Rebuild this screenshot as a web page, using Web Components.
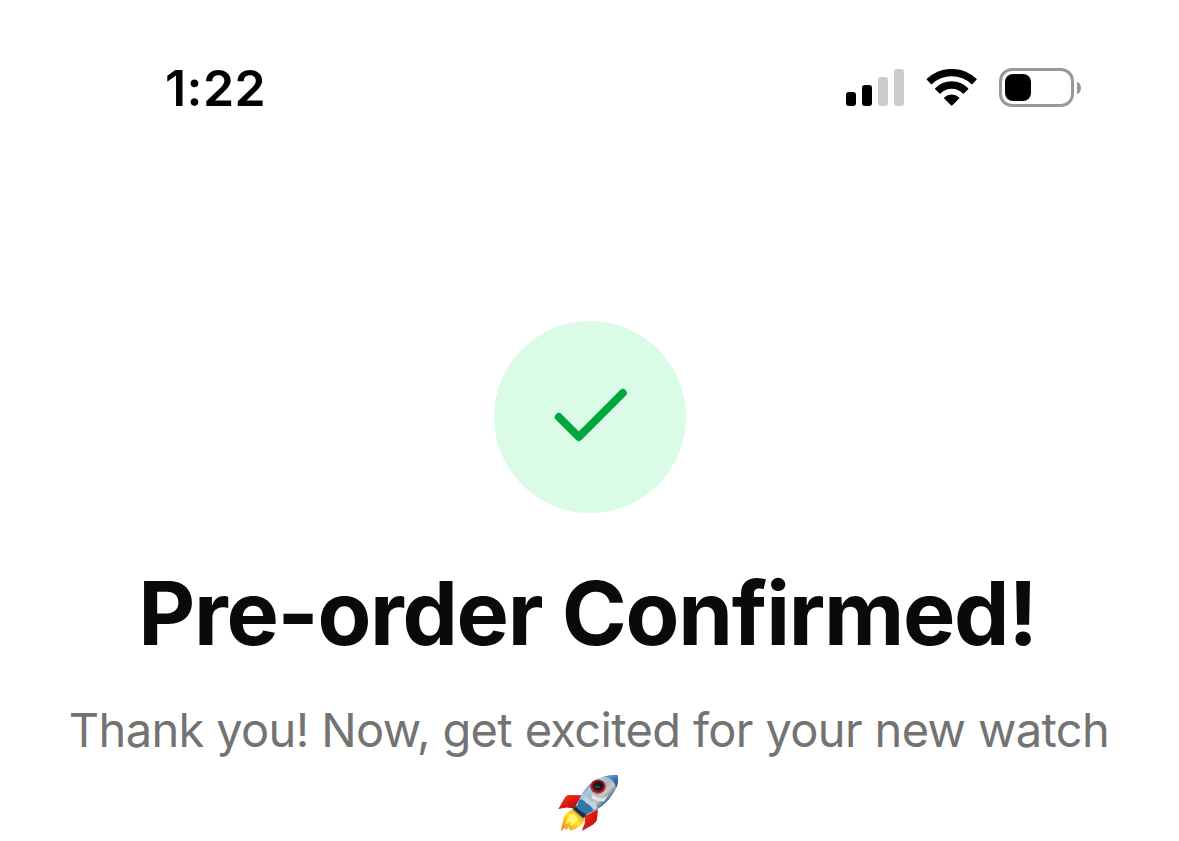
<!DOCTYPE html>
<html lang="en">
<head>
<meta charset="utf-8">
<title>Pre-order Confirmed</title>
<style>
    body{
        margin:0;
        background:white;
        font-family:Inter, "Liberation Sans", sans-serif;
        color:#0a0a0a;
    }
</style>
</head>
<body>
<order-confirmed></order-confirmed>
<script>
class SignalBars extends HTMLElement {
    constructor(){
        super();
        this.attachShadow({ mode : 'open' });
        this.shadowRoot.innerHTML = this.componentCSS() + this.componentHTML();
    }

    componentCSS(){
        return `
            <style>
                :host{
                    display:flex;
                    align-items:flex-end;
                    gap:6px;
                    height:37px;
                }
                i{
                    width:10px;
                    border-radius:3px;
                    background:#cdcdcd;
                }
                i.on{ background:black; }
            </style>`;
    }

    componentHTML(){
        const level = Number(this.getAttribute('level')) || 2;
        return [14, 21, 29, 37].map((h, n) => `<i class="${n < level ? 'on' : ''}" style="height:${h}px"></i>`).join('');
    }
}

class WifiIcon extends HTMLElement {
    constructor(){
        super();
        this.attachShadow({ mode : 'open' });
        this.shadowRoot.innerHTML = `
            <style>
                :host{ display:block; width:51px; height:37px; }
                svg{ display:block; }
            </style>
            <svg width="51" height="37" viewBox="273 42 153 111" stroke="black" stroke-width="4" stroke-linejoin="round">
                <path d="M277 73A106 106 0 0 1 423 73L411 86A89 89 0 0 0 289 86Z"/>
                <path d="M302 101A67 67 0 0 1 398 101L385 114A49 49 0 0 0 315 114Z"/>
                <path d="M329 129A30 30 0 0 1 371 129L350 150Z"/>
            </svg>`;
    }
}

class BatteryIcon extends HTMLElement {
    constructor(){
        super();
        this.attachShadow({ mode : 'open' });
        this.shadowRoot.innerHTML = `
            <style>
                :host{ display:flex; align-items:center; gap:3px; }
                .shell{
                    box-sizing:border-box;
                    width:75px;
                    height:39px;
                    padding:3px;
                    border:3px solid #999;
                    border-radius:13px;
                }
                .charge{
                    width:26px;
                    height:27px;
                    border-radius:8px;
                    background:black;
                }
                .cap{
                    width:4px;
                    height:12px;
                    border-radius:0 4px 4px 0 / 0 6px 6px 0;
                    background:#999;
                }
            </style>
            <div class="shell"><div class="charge"></div></div>
            <div class="cap"></div>`;
    }
}

class StatusBar extends HTMLElement {
    constructor(){
        super();
        this.attachShadow({ mode : 'open' });
        this.shadowRoot.innerHTML = `
            <style>
                :host{
                    box-sizing:border-box;
                    display:flex;
                    justify-content:space-between;
                    align-items:center;
                    height:175px;
                    padding:0 98px 0 165px;
                }
                .time{
                    font-size:50px;
                    line-height:60px;
                    font-weight:600;
                    letter-spacing:.4px;
                    color:black;
                }
                .icons{ display:flex; align-items:center; }
                wifi-icon{ margin:0 22px; }
            </style>
            <div class="time"><slot></slot></div>
            <div class="icons">
                <signal-bars level="2"></signal-bars>
                <wifi-icon></wifi-icon>
                <battery-icon></battery-icon>
            </div>`;
    }
}

class CheckBadge extends HTMLElement {
    constructor(){
        super();
        this.attachShadow({ mode : 'open' });
        this.shadowRoot.innerHTML = `
            <style>
                :host{
                    display:grid;
                    place-items:center;
                    width:192px;
                    height:192px;
                    border-radius:50%;
                    background:#dafce6;
                }
            </style>
            <svg width="96" height="96" viewBox="0 0 24 24" fill="none" stroke="#00a63e" stroke-width="2" stroke-linecap="round" stroke-linejoin="round">
                <path d="M20.2 6L9.2 17l-5-5"/>
            </svg>`;
    }
}

class RocketIcon extends HTMLElement {
    constructor(){
        super();
        this.attachShadow({ mode : 'open' });
        this.shadowRoot.innerHTML = `
            <style>
                :host{ display:block; width:63px; height:61px; }
                svg{ display:block; }
            </style>
            <svg width="63" height="61" viewBox="37 26 186 180" role="img" aria-label="🚀">
                <defs>
                    <linearGradient id="body" gradientUnits="userSpaceOnUse" x1="120" y1="58" x2="178" y2="116">
                        <stop offset="0" stop-color="#3f82b8"/>
                        <stop offset=".25" stop-color="#a9cbe2"/>
                        <stop offset=".55" stop-color="#a9b8c0"/>
                        <stop offset=".75" stop-color="#c9c9c4"/>
                        <stop offset="1" stop-color="#476c91"/>
                    </linearGradient>
                    <linearGradient id="nose" x1="0" y1="0" x2="1" y2="1">
                        <stop offset="0" stop-color="#76b5dd"/>
                        <stop offset=".55" stop-color="#3977b5"/>
                        <stop offset="1" stop-color="#244879"/>
                    </linearGradient>
                    <linearGradient id="fin" x1="0" y1="0" x2="1" y2="1">
                        <stop offset="0" stop-color="#f04424"/>
                        <stop offset=".5" stop-color="#dc1712"/>
                        <stop offset="1" stop-color="#8d1419"/>
                    </linearGradient>
                    <linearGradient id="flame" x1="1" y1="0" x2="0" y2="1">
                        <stop offset="0" stop-color="#e97813"/>
                        <stop offset=".45" stop-color="#ffe52d"/>
                        <stop offset="1" stop-color="#ed7912"/>
                    </linearGradient>
                </defs>
                <path fill="url(#fin)" d="M110 92L69 91Q61 94 56 106L41 132L66 128L88 131Z"/>
                <path fill="url(#fin)" d="M158 133L155 164Q153 171 143 179L110 197L119 174L119 153Z"/>
                <path fill="url(#flame)" d="M83 133Q59 143 56 162L48 199L61 186L62 195L72 187L76 196Q96 191 106 181Q119 170 119 155Z"/>
                <path fill="#fff36a" d="M84 145Q66 153 63 177L78 169L76 181Q94 176 101 160Z"/>
                <path fill="#294764" d="M92 123L83 130Q83 136 92 140L111 157Q118 160 122 154L129 142L109 122Z"/>
                <path fill="url(#body)" d="M95 128Q107 77 143 51Q176 30 215 32Q220 62 203 86Q177 130 126 147Z"/>
                <path fill="url(#nose)" d="M172 37Q197 30 216 32Q220 53 212 70Q207 53 195 44Q185 37 172 37Z"/>
                <path fill="#2e77ad" d="M102 105Q115 99 124 113Q136 119 145 138L126 147L95 128Z"/>
                <path fill="#e2e5e4" d="M143 87Q154 101 171 101L188 91L176 109Q158 110 138 101Z"/>
                <path fill="#bcd4e4" d="M119 96Q132 98 137 110Q153 115 156 130L145 135Q139 121 124 115Q116 105 111 106Z"/>
                <ellipse cx="158" cy="66" rx="23" ry="21" fill="#c4242c"/>
                <ellipse cx="158" cy="65" rx="18" ry="17" fill="#70151e"/>
                <ellipse cx="159" cy="64" rx="14" ry="13" fill="#171a20"/>
                <path fill="#3c5062" d="M149 66Q154 73 166 68L163 65Q156 68 153 62Z"/>
                <path fill="none" stroke="#15263a" stroke-width="5" d="M91 130L118 155"/>
            </svg>`;
    }
}

class OrderConfirmed extends HTMLElement {
    constructor(){
        super();
        this.attachShadow({ mode : 'open' });
        this.shadowRoot.innerHTML = this.componentCSS() + this.componentHTML();
    }

    componentCSS(){
        return `
            <style>
                :host{
                    display:block;
                    height:841px;
                    overflow:hidden;
                }
                main{
                    display:flex;
                    flex-direction:column;
                    align-items:center;
                    padding-top:146px;
                }
                check-badge{ margin-left:1px; }
                h1{
                    margin:46px 0 27px;
                    padding-right:4px;
                    font-size:88px;
                    line-height:108px;
                    font-weight:700;
                    letter-spacing:-1.3px;
                    white-space:nowrap;
                }
                p{
                    margin:0;
                    padding-right:1px;
                    font-size:47px;
                    line-height:72px;
                    letter-spacing:-.65px;
                    color:#737373;
                    white-space:nowrap;
                }
                rocket-icon{
                    margin-top:7px;
                    padding-right:3px;
                }
            </style>`;
    }

    componentHTML(){
        return `
            <status-bar>1:22</status-bar>
            <main>
                <check-badge></check-badge>
                <h1>Pre-order Confirmed!</h1>
                <p>Thank you! Now, get excited for your new watch</p>
                <rocket-icon></rocket-icon>
            </main>`;
    }
}

window.customElements.define('signal-bars', SignalBars)
window.customElements.define('wifi-icon', WifiIcon)
window.customElements.define('battery-icon', BatteryIcon)
window.customElements.define('status-bar', StatusBar)
window.customElements.define('check-badge', CheckBadge)
window.customElements.define('rocket-icon', RocketIcon)
window.customElements.define('order-confirmed', OrderConfirmed)
</script>
</body>
</html>
